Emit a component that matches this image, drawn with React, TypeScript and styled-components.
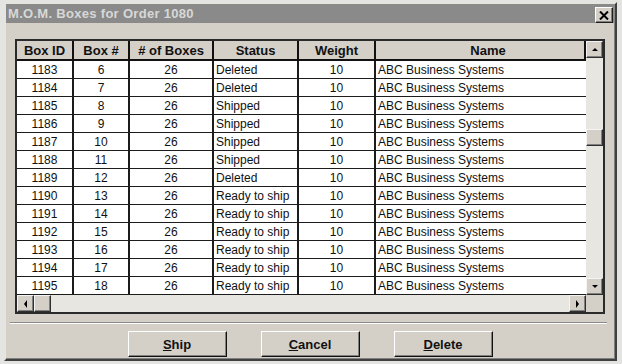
import React from 'react';
import styled, { createGlobalStyle } from 'styled-components';

interface IBox {
  id: number;
  boxNo: number;
  count: number;
  status: string;
  weight: number;
  name: string;
}

const statuses = [
  'Deleted', 'Deleted', 'Shipped', 'Shipped', 'Shipped', 'Shipped', 'Deleted',
  'Ready to ship', 'Ready to ship', 'Ready to ship', 'Ready to ship', 'Ready to ship', 'Ready to ship',
];

const boxes: IBox[] = statuses.map((status, i) => ({
  id: 1183 + i,
  boxNo: 6 + i,
  count: 26,
  status,
  weight: 10,
  name: 'ABC Business Systems',
}));

const columns = '57px 56px 84px 85px 77px 1fr';

const GlobalStyle = createGlobalStyle`
  html, body {
    margin: 0;
    padding: 0;
  }
  body {
    width: 622px;
    height: 364px;
    overflow: hidden;
    background: #e4e4e2;
    font-family: "Liberation Sans", Arial, sans-serif;
  }
`;

const Dialog = styled.div`
  box-sizing: border-box;
  width: 613px;
  height: 359px;
  margin: 2px 0 0 4px;
  display: flex;
  flex-direction: column;
  background: #d4d0c8;
  border: 2px solid;
  border-color: #e6e4de #404040 #404040 #e6e4de;
  box-shadow: inset -1px -1px #808080;
`;

const TitleBar = styled.div`
  height: 19px;
  display: flex;
  align-items: center;
  justify-content: space-between;
  padding: 0 2px 0 2px;
  background: #8a8a8a;
`;

const Title = styled.span`
  color: #d8d8d6;
  font-size: 13px;
  font-weight: bold;
  letter-spacing: 0.3px;
`;

const CloseButton = styled.div`
  box-sizing: border-box;
  width: 18px;
  height: 16px;
  margin-top: 3px;
  display: flex;
  align-items: center;
  justify-content: center;
  background: #d4d0c8;
  border: 1px solid;
  border-color: #fff #202020 #202020 #fff;
  box-shadow: inset -1px -1px #808080;
`;

const Body = styled.div`
  flex: 1;
  display: flex;
  flex-direction: column;
  padding: 16px 10px 0 9px;
`;

const Grid = styled.div`
  box-sizing: border-box;
  width: 590px;
  height: 275px;
  display: grid;
  grid-template-columns: 1fr 17px;
  grid-template-rows: 1fr 17px;
  border: 2px solid #2a2a2a;
`;

const TableArea = styled.div`
  overflow: hidden;
  background: #fff;
`;

const HeaderRow = styled.div`
  display: grid;
  grid-template-columns: ${columns};
  height: 20px;
`;

const HeaderCell = styled.div<{ $shift?: number }>`
  box-sizing: border-box;
  display: flex;
  align-items: center;
  justify-content: center;
  padding-left: ${({ $shift }) => $shift || 0}px;
  background: #d4d0c8;
  border-right: 2px solid #111;
  border-bottom: 2px solid #111;
  font-size: 13px;
  font-weight: bold;
  color: #111;
`;

const Row = styled.div`
  box-sizing: border-box;
  display: grid;
  grid-template-columns: ${columns};
  height: 18px;
  border-bottom: 1px solid #1c1c1c;
`;

const Cell = styled.div<{ $align?: 'left' | 'center'; $last?: boolean }>`
  box-sizing: border-box;
  padding: 1px 2px 0;
  line-height: 16px;
  font-size: 12px;
  color: #111;
  white-space: nowrap;
  text-align: ${({ $align }) => $align || 'center'};
  border-right: ${({ $last }) => ($last ? 'none' : '2px solid #1c1c1c')};
`;

const VScroll = styled.div`
  display: flex;
  flex-direction: column;
  background: #e8e6e0;
`;

const HScroll = styled.div`
  display: flex;
  background: #e8e6e0;
`;

const Track = styled.div<{ $vertical?: boolean }>`
  flex: 1;
  display: flex;
  flex-direction: ${({ $vertical }) => ($vertical ? 'column' : 'row')};
`;

const ScrollPart = styled.div<{ $offset?: number; $vertical?: boolean }>`
  box-sizing: border-box;
  width: 17px;
  height: 17px;
  flex-shrink: 0;
  display: flex;
  align-items: center;
  justify-content: center;
  margin-top: ${({ $vertical, $offset }) => ($vertical ? $offset || 0 : 0)}px;
  background: #d4d0c8;
  border: 1px solid;
  border-color: #f4f4f4 #303030 #303030 #f4f4f4;
  box-shadow: inset -1px -1px #808080;
`;

const Corner = styled.div`
  background: #d4d0c8;
`;

const Separator = styled.div`
  margin: 8px -2px 0 -5px;
  border-top: 1px solid #8a8a8a;
  border-bottom: 1px solid #fff;
`;

const ButtonRow = styled.div`
  display: flex;
  justify-content: center;
  gap: 34px;
  margin-top: 7px;
`;

const Button = styled.button`
  box-sizing: border-box;
  width: 99px;
  height: 26px;
  padding: 0;
  background: #d4d0c8;
  border: 1px solid;
  border-color: #fff #111 #111 #fff;
  box-shadow: inset -1px -1px #808080;
  font-family: "Liberation Sans", Arial, sans-serif;
  font-size: 13px;
  font-weight: bold;
  color: #111;
`;

const Arrow = ({ dir }: { dir: 'up' | 'down' | 'left' | 'right' }) => {
  const points = {
    up: '1,5 4,2 7,5',
    down: '1,2 4,5 7,2',
    left: '5,0 2,4 5,8',
    right: '2,0 5,4 2,8',
  }[dir];
  const vertical = dir === 'up' || dir === 'down';
  return (
    <svg width={vertical ? 8 : 7} height={vertical ? 7 : 8} viewBox={vertical ? '0 0 8 7' : '0 0 7 8'}>
      <polygon points={points} fill="#000" />
    </svg>
  );
};

export default function App() {
  return (
    <>
      <GlobalStyle />
      <Dialog>
        <TitleBar>
          <Title>M.O.M. Boxes for Order 1080</Title>
          <CloseButton>
            <svg width="10" height="9" viewBox="0 0 10 9">
              <path d="M1 0.5 L9 8.5 M9 0.5 L1 8.5" stroke="#000" strokeWidth="2" />
            </svg>
          </CloseButton>
        </TitleBar>
        <Body>
          <Grid>
            <TableArea>
              <HeaderRow>
                <HeaderCell>Box ID</HeaderCell>
                <HeaderCell>Box #</HeaderCell>
                <HeaderCell># of Boxes</HeaderCell>
                <HeaderCell>Status</HeaderCell>
                <HeaderCell>Weight</HeaderCell>
                <HeaderCell $shift={16}>Name</HeaderCell>
              </HeaderRow>
              {boxes.map((b) => (
                <Row key={b.id}>
                  <Cell>{b.id}</Cell>
                  <Cell>{b.boxNo}</Cell>
                  <Cell>{b.count}</Cell>
                  <Cell $align="left">{b.status}</Cell>
                  <Cell>{b.weight}</Cell>
                  <Cell $align="left" $last>{b.name}</Cell>
                </Row>
              ))}
            </TableArea>
            <VScroll>
              <ScrollPart><Arrow dir="up" /></ScrollPart>
              <Track $vertical>
                <ScrollPart $vertical $offset={71} />
              </Track>
              <ScrollPart><Arrow dir="down" /></ScrollPart>
            </VScroll>
            <HScroll>
              <ScrollPart><Arrow dir="left" /></ScrollPart>
              <Track>
                <ScrollPart />
              </Track>
              <ScrollPart><Arrow dir="right" /></ScrollPart>
            </HScroll>
            <Corner />
          </Grid>
          <Separator />
          <ButtonRow>
            <Button><u>S</u>hip</Button>
            <Button><u>C</u>ancel</Button>
            <Button><u>D</u>elete</Button>
          </ButtonRow>
        </Body>
      </Dialog>
    </>
  );
}
